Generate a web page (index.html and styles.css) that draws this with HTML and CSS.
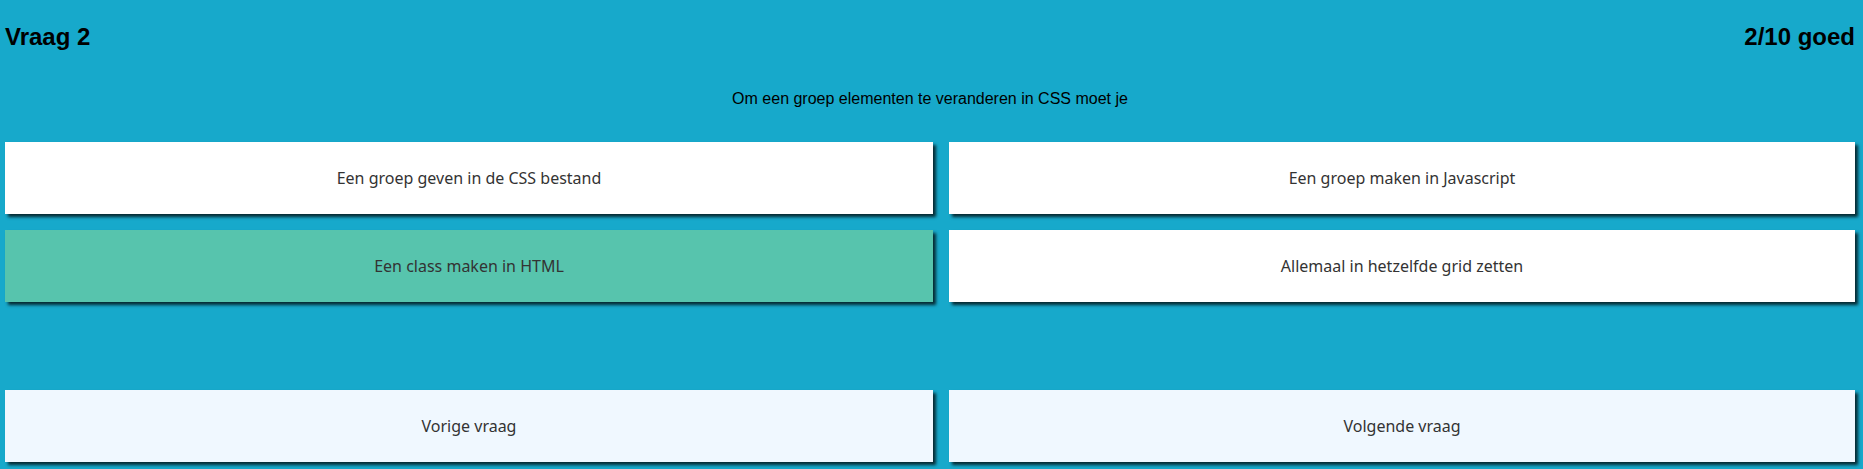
FILE: index.html
```html
<!DOCTYPE html>
<html lang="nl">
<head>
<meta charset="utf-8">
<title>Quiz</title>
<link rel="stylesheet" href="styles.css">
</head>
<body>
<main class="quiz">
  <header class="quiz-header">
    <h2 class="quiz-title">Vraag 2</h2>
    <h2 class="quiz-score">2/10 goed</h2>
  </header>
  <p class="question">Om een groep elementen te veranderen in CSS moet je</p>
  <section class="answers">
    <button class="card">Een groep geven in de CSS bestand</button>
    <button class="card">Een groep maken in Javascript</button>
    <button class="card card-correct">Een class maken in HTML</button>
    <button class="card">Allemaal in hetzelfde grid zetten</button>
  </section>
  <nav class="nav-buttons">
    <button class="card card-nav">Vorige vraag</button>
    <button class="card card-nav">Volgende vraag</button>
  </nav>
</main>
</body>
</html>
```
FILE: styles.css
```css
html, body {
  margin: 0;
  padding: 0;
}

body {
  background: #17a9cb;
  font-family: "Liberation Sans", Arial, sans-serif;
  color: #000;
  height: 469px;
  overflow: hidden;
}

.quiz {
  padding: 0 8px 0 5px;
}

.quiz-header {
  display: flex;
  justify-content: space-between;
  align-items: flex-start;
  padding-top: 23px;
}

.quiz-title,
.quiz-score {
  margin: 0;
  font-size: 24px;
  font-weight: bold;
  line-height: 28px;
}

.question {
  margin: 39px 0 0 0;
  text-align: center;
  font-size: 16px;
  line-height: 18px;
}

.answers,
.nav-buttons {
  display: grid;
  grid-template-columns: 928fr 906fr;
  column-gap: 16px;
  row-gap: 16px;
}

.answers {
  margin-top: 34px;
}

.nav-buttons {
  margin-top: 88px;
}

.card {
  height: 72px;
  display: flex;
  align-items: center;
  justify-content: center;
  background: #ffffff;
  border: none;
  border-radius: 0;
  padding: 0 10px;
  margin: 0;
  font-family: "Noto Sans", "Open Sans", sans-serif;
  font-size: 16px;
  color: #333333;
  box-shadow: 3px 3px 3px rgba(0, 0, 0, 0.75);
}

.card-correct {
  background: #57c4ad;
}

.card-nav {
  background: #f0f8ff;
}
```
